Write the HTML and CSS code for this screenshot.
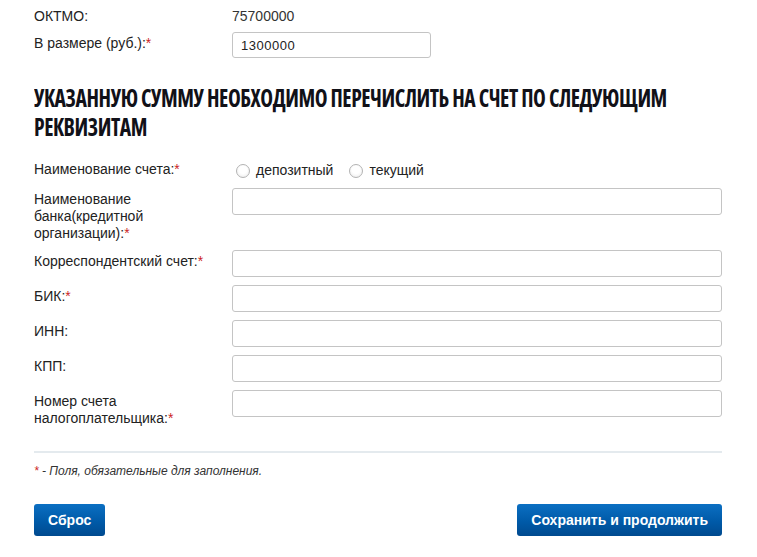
FILE: index.html
```html
<!DOCTYPE html>
<html lang="ru">
<head>
<meta charset="utf-8">
<title>Реквизиты</title>
<link rel="stylesheet" href="styles.css">
</head>
<body>
<div class="page">
  <div class="row row-static">
    <div class="label">ОКТМО:</div>
    <div class="value">75700000</div>
  </div>
  <div class="row">
    <div class="label">В размере (руб.):<span class="req">*</span></div>
    <div class="field"><div class="input input-short">1300000</div></div>
  </div>

  <div class="heading-wrap">
    <h2 class="heading">Указанную сумму необходимо перечислить на счет по следующим реквизитам</h2>
  </div>

  <div class="row row-radio">
    <div class="label">Наименование счета:<span class="req">*</span></div>
    <div class="radios">
      <span class="radio"><span class="circle"></span>депозитный</span>
      <span class="radio"><span class="circle"></span>текущий</span>
    </div>
  </div>
  <div class="row">
    <div class="label">Наименование банка(кредитной организации):<span class="req">*</span></div>
    <div class="field"><div class="input"></div></div>
  </div>
  <div class="row">
    <div class="label">Корреспондентский счет:<span class="req">*</span></div>
    <div class="field"><div class="input"></div></div>
  </div>
  <div class="row">
    <div class="label">БИК:<span class="req">*</span></div>
    <div class="field"><div class="input"></div></div>
  </div>
  <div class="row">
    <div class="label">ИНН:</div>
    <div class="field"><div class="input"></div></div>
  </div>
  <div class="row">
    <div class="label">КПП:</div>
    <div class="field"><div class="input"></div></div>
  </div>
  <div class="row">
    <div class="label">Номер счета налогоплательщика:<span class="req">*</span></div>
    <div class="field"><div class="input"></div></div>
  </div>

  <hr class="divider">
  <p class="note"><span class="req">*</span> - Поля, обязательные для заполнения.</p>

  <div class="actions">
    <button class="btn" type="button">Сброс</button>
    <button class="btn" type="button">Сохранить и продолжить</button>
  </div>
</div>
</body>
</html>
```

FILE: styles.css
```css
html, body {
  margin: 0;
  padding: 0;
  background: #ffffff;
}

body {
  font-family: "Liberation Sans", Arial, sans-serif;
  font-size: 14px;
  line-height: 17px;
  color: #222222;
}

.page {
  width: 688px;
  padding: 5px 0 0 34px;
}

.row {
  display: flex;
  align-items: flex-start;
  margin-bottom: 8px;
}

.row-static {
  margin-bottom: 7px;
}

.label {
  width: 190px;
  flex: 0 0 190px;
  margin-right: 8px;
  padding-top: 3px;
}

.value {
  padding-top: 3px;
  color: #333333;
}

.req {
  color: #cc1f1f;
}

.field {
  flex: 1 1 auto;
}

.input {
  box-sizing: border-box;
  height: 27px;
  border: 1px solid #c4c4c4;
  border-radius: 3px;
  background: #ffffff;
  padding: 4px 8px;
  font-size: 13px;
  line-height: 17px;
  color: #222222;
}

.input-short {
  width: 199px;
  height: 26px;
  letter-spacing: 0.5px;
}

.heading-wrap {
  margin: 25px 0 17px;
  width: 688px;
  overflow: visible;
}

.heading {
  margin: 0;
  width: 795px;
  transform: scaleX(0.865);
  transform-origin: 0 0;
  font-family: "Open Sans", "Noto Sans", "DejaVu Sans", sans-serif;
  font-stretch: 75%;
  font-weight: 700;
  font-size: 25px;
  letter-spacing: -0.5px;
  line-height: 29px;
  text-transform: uppercase;
  color: #111118;
}

.row-radio {
  margin-bottom: 8px;
  min-height: 22px;
}

.radios {
  display: flex;
  align-items: center;
  gap: 16px;
  padding-top: 4px;
  padding-left: 4px;
  color: #222222;
}

.radio {
  display: inline-flex;
  align-items: center;
}

.circle {
  box-sizing: border-box;
  width: 14px;
  height: 14px;
  border-radius: 50%;
  border: 1px solid #b3b3b3;
  background: radial-gradient(circle at 50% 40%, #ffffff 40%, #e9e9e9 100%);
  margin-right: 6px;
}

.divider {
  border: 0;
  height: 2px;
  background: #e4eaee;
  margin: 24px 0 10px;
}

.note {
  margin: 0;
  font-size: 12px;
  line-height: 17px;
  font-style: italic;
  color: #333333;
}

.actions {
  display: flex;
  justify-content: space-between;
  margin-top: 24px;
}

.btn {
  height: 32px;
  padding: 0 14px;
  border: 0;
  border-radius: 3px;
  background: linear-gradient(to bottom, #0b6fc2 0%, #005aa8 55%, #004a8f 100%);
  color: #ffffff;
  font-family: "Liberation Sans", Arial, sans-serif;
  font-weight: bold;
  font-size: 14px;
  cursor: pointer;
}
```
